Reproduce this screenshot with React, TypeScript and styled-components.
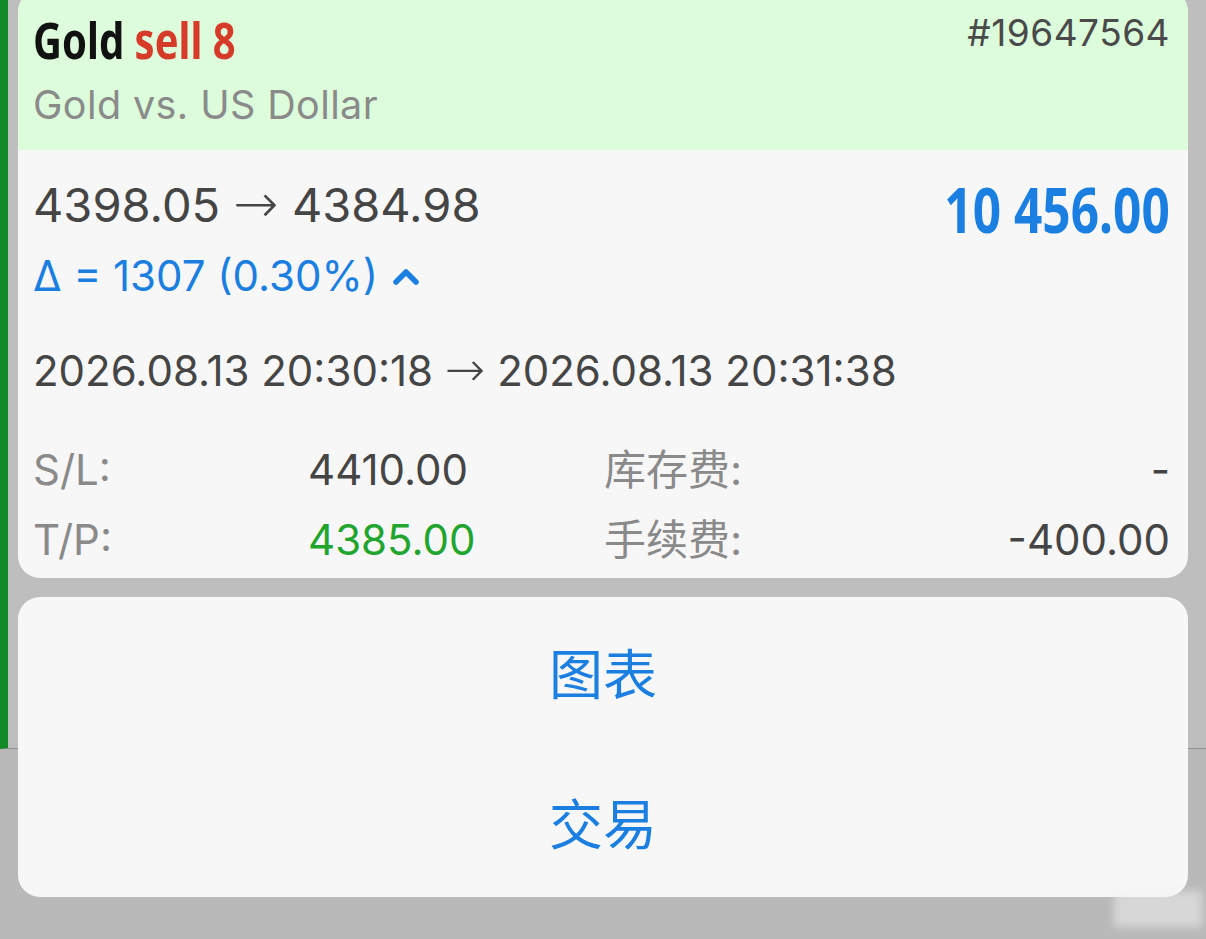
import styled, { createGlobalStyle } from "styled-components";

const GlobalStyle = createGlobalStyle`
  html, body {
    margin: 0;
    padding: 0;
    background: #b9b9b9;
  }
  body {
    font-family: "Inter", "Liberation Sans", "Noto Sans CJK SC", sans-serif;
  }
`;

const Screen = styled.div`
  position: relative;
  width: 1206px;
  height: 939px;
  overflow: hidden;
  background: #b9b9b9;
`;

// the dimmed list row behind the sheet
const ListRow = styled.div`
  height: 748px;
  background: #bebebe;
  border-left: 8px solid #138a28;
  border-bottom: 1px solid #8f8f8f;
`;

const Sheet = styled.div`
  position: absolute;
  top: -10px;
  left: 18px;
  right: 18px;
  display: flex;
  flex-direction: column;
  gap: 19px;
`;

const Card = styled.div`
  border-radius: 22px;
  overflow: hidden;
  background: #f7f7f7;
`;

const Header = styled.div`
  height: 160px;
  box-sizing: border-box;
  padding: 20px 18px 0 15px;
  background: #dcfcdc;
  display: flex;
  justify-content: space-between;
`;

const TitleBlock = styled.div`
  display: flex;
  flex-direction: column;
  align-items: flex-start;
`;

// no condensed face is installed, so squeeze a bold one
const Condensed = styled.div<{ $origin?: "left" | "right" }>`
  display: inline-block;
  font-family: "Noto Sans", "DejaVu Sans", sans-serif;
  font-weight: 700;
  white-space: nowrap;
  transform: scaleX(0.8);
  transform-origin: ${(p) => p.$origin ?? "left"} center;
`;

const Title = styled(Condensed)`
  font-size: 50px;
  line-height: 60px;
  color: #111;
`;

const Side = styled.span`
  color: #d63a28;
`;

const Subtitle = styled.div`
  margin-top: 10px;
  font-size: 39.5px;
  line-height: 50px;
  letter-spacing: 0.4px;
  color: #8a8a8a;
`;

const Ticket = styled.div`
  font-size: 37px;
  line-height: 46px;
  letter-spacing: 0.5px;
  color: #4a4a4a;
`;

const Body = styled.div`
  padding: 25px 18px 3px 15px;
`;

const PriceRow = styled.div`
  display: flex;
  justify-content: space-between;
  align-items: flex-start;
  height: 60px;
`;

const Prices = styled.div`
  font-size: 47px;
  line-height: 60px;
  color: #454545;
  white-space: nowrap;
`;

const Arrow = styled.span`
  font-family: "DejaVu Sans", sans-serif;
  font-size: 1.15em;
  line-height: 0;
  font-weight: 200;
`;

const Profit = styled(Condensed)`
  margin-top: 4px;
  font-size: 62px;
  line-height: 60px;
  color: #1a7fe0;
`;

const Delta = styled.div`
  margin-top: 16px;
  height: 50px;
  display: flex;
  align-items: center;
  gap: 14px;
  font-size: 42px;
  line-height: 50px;
  color: #1a7fe0;
`;

const Dates = styled.div`
  margin-top: 45px;
  height: 50px;
  font-size: 42px;
  line-height: 50px;
  color: #454545;
  white-space: nowrap;
`;

const Stats = styled.div`
  margin-top: 39px;
  display: grid;
  grid-template-columns: 275px 296px 1fr auto;
  grid-auto-rows: 70px;
  align-items: center;
  font-size: 42px;
  line-height: 50px;
`;

const Label = styled.div`
  color: #8a8a8a;
  font-family: "Inter", "Noto Sans CJK SC", sans-serif;
`;

const Value = styled.div<{ $tone?: "green" }>`
  color: ${(p) => (p.$tone === "green" ? "#22a52e" : "#454545")};
`;

const RightValue = styled(Value)`
  text-align: right;
`;

const ActionButton = styled.div`
  height: 150px;
  display: flex;
  align-items: center;
  justify-content: center;
  font-family: "Noto Sans CJK SC", sans-serif;
  font-weight: 400;
  font-size: 54px;
  line-height: 60px;
  color: #1a7fe0;
`;

const Watermark = styled.div`
  position: absolute;
  right: 4px;
  bottom: 12px;
  width: 88px;
  height: 36px;
  background: rgba(240, 240, 240, 0.55);
  filter: blur(4px);
`;

function Chevron() {
  return (
    <svg width="28" height="20" viewBox="0 0 28 20">
      <polyline
        points="4,16 14,6 24,16"
        fill="none"
        stroke="#1a7fe0"
        strokeWidth="5.5"
        strokeLinecap="round"
        strokeLinejoin="round"
      />
    </svg>
  );
}

export default function App() {
  return (
    <Screen>
      <GlobalStyle />
      <ListRow />
      <Sheet>
        <Card>
          <Header>
            <TitleBlock>
              <Title>
                Gold <Side>sell 8</Side>
              </Title>
              <Subtitle>Gold vs. US Dollar</Subtitle>
            </TitleBlock>
            <Ticket>#19647564</Ticket>
          </Header>
          <Body>
            <PriceRow>
              <Prices>
                4398.05 <Arrow>→</Arrow> 4384.98
              </Prices>
              <Profit $origin="right">10 456.00</Profit>
            </PriceRow>
            <Delta>
              <span>Δ = 1307 (0.30%)</span>
              <Chevron />
            </Delta>
            <Dates>
              2026.08.13 20:30:18 <Arrow>→</Arrow> 2026.08.13 20:31:38
            </Dates>
            <Stats>
              <Label>S/L:</Label>
              <Value>4410.00</Value>
              <Label>库存费:</Label>
              <RightValue>-</RightValue>
              <Label>T/P:</Label>
              <Value $tone="green">4385.00</Value>
              <Label>手续费:</Label>
              <RightValue>-400.00</RightValue>
            </Stats>
          </Body>
        </Card>
        <Card>
          <ActionButton>图表</ActionButton>
          <ActionButton>交易</ActionButton>
        </Card>
      </Sheet>
      <Watermark />
    </Screen>
  );
}
